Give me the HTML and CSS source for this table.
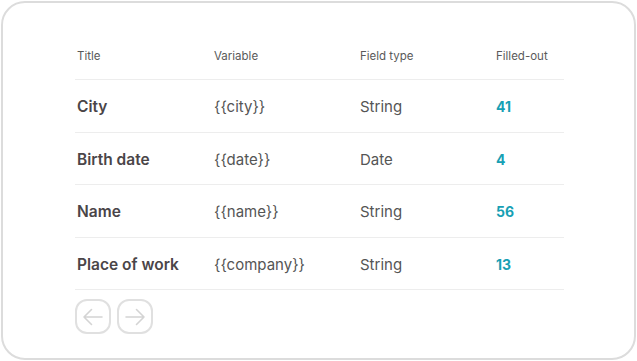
FILE: index.html
```html
<!DOCTYPE html>
<html lang="en">
<head>
    <meta charset="UTF-8">
    <meta name="viewport" content="width=device-width, initial-scale=1.0">
    <title>Fields</title>
    <link rel="stylesheet" href="styles.css">
</head>
<body>
    <div class="card">
        <div class="fields">
            <div class="row head">
                <div>Title</div>
                <div>Variable</div>
                <div>Field type</div>
                <div>Filled-out</div>
            </div>
            <div class="row">
                <div class="title">City</div>
                <div class="var">{{city}}</div>
                <div class="type">String</div>
                <div class="count">41</div>
            </div>
            <div class="row">
                <div class="title">Birth date</div>
                <div class="var">{{date}}</div>
                <div class="type">Date</div>
                <div class="count">4</div>
            </div>
            <div class="row">
                <div class="title">Name</div>
                <div class="var">{{name}}</div>
                <div class="type">String</div>
                <div class="count">56</div>
            </div>
            <div class="row">
                <div class="title">Place of work</div>
                <div class="var">{{company}}</div>
                <div class="type">String</div>
                <div class="count">13</div>
            </div>
        </div>

        <div class="pager">
            <button class="nav" aria-label="Previous">
                <svg width="24" height="24" viewBox="0 0 24 24"><path d="M21 12H3M10.5 4.5L3 12l7.5 7.5" fill="none" stroke="#d4d4d4" stroke-width="1.6" stroke-linecap="round" stroke-linejoin="round"/></svg>
            </button>
            <button class="nav" aria-label="Next">
                <svg width="24" height="24" viewBox="0 0 24 24"><path d="M3 12h18M13.5 4.5L21 12l-7.5 7.5" fill="none" stroke="#d4d4d4" stroke-width="1.6" stroke-linecap="round" stroke-linejoin="round"/></svg>
            </button>
        </div>
    </div>
</body>
</html>
```

FILE: styles.css
```css
body {
    margin: 0;
    background: white;
    font-family: Inter, 'Noto Sans', sans-serif;
}
.card {
    margin: 1px;
    height: 359px;
    box-sizing: border-box;
    border: 2px solid #dcdcdc;
    border-radius: 24px;
    padding: 28px 0 0 72px;
}
.fields { width: 489px; }
.row {
    display: grid;
    grid-template-columns: 137px 146px 136px 1fr;
    align-items: center;
    height: 52.5px;
    box-sizing: border-box;
    border-bottom: 1px solid #ededed;
    padding: 2px 0 0 2px;
    font-size: 15px;
    color: #555;
}
.row.head {
    height: 49px;
    font-size: 11.5px;
    color: #5a5a5a;
}
.title {
    font-size: 15.5px;
    font-weight: 600;
    color: #4a4548;
}
.count {
    font-size: 14px;
    font-weight: 700;
    color: #17a0b4;
}
.pager {
    display: flex;
    gap: 6px;
    margin: 9px 0 0 0;
}
.nav {
    width: 36px;
    height: 35px;
    padding: 0;
    border: 2px solid #e0e0e0;
    border-radius: 12px;
    background: white;
    display: flex;
    align-items: center;
    justify-content: center;
}
```
